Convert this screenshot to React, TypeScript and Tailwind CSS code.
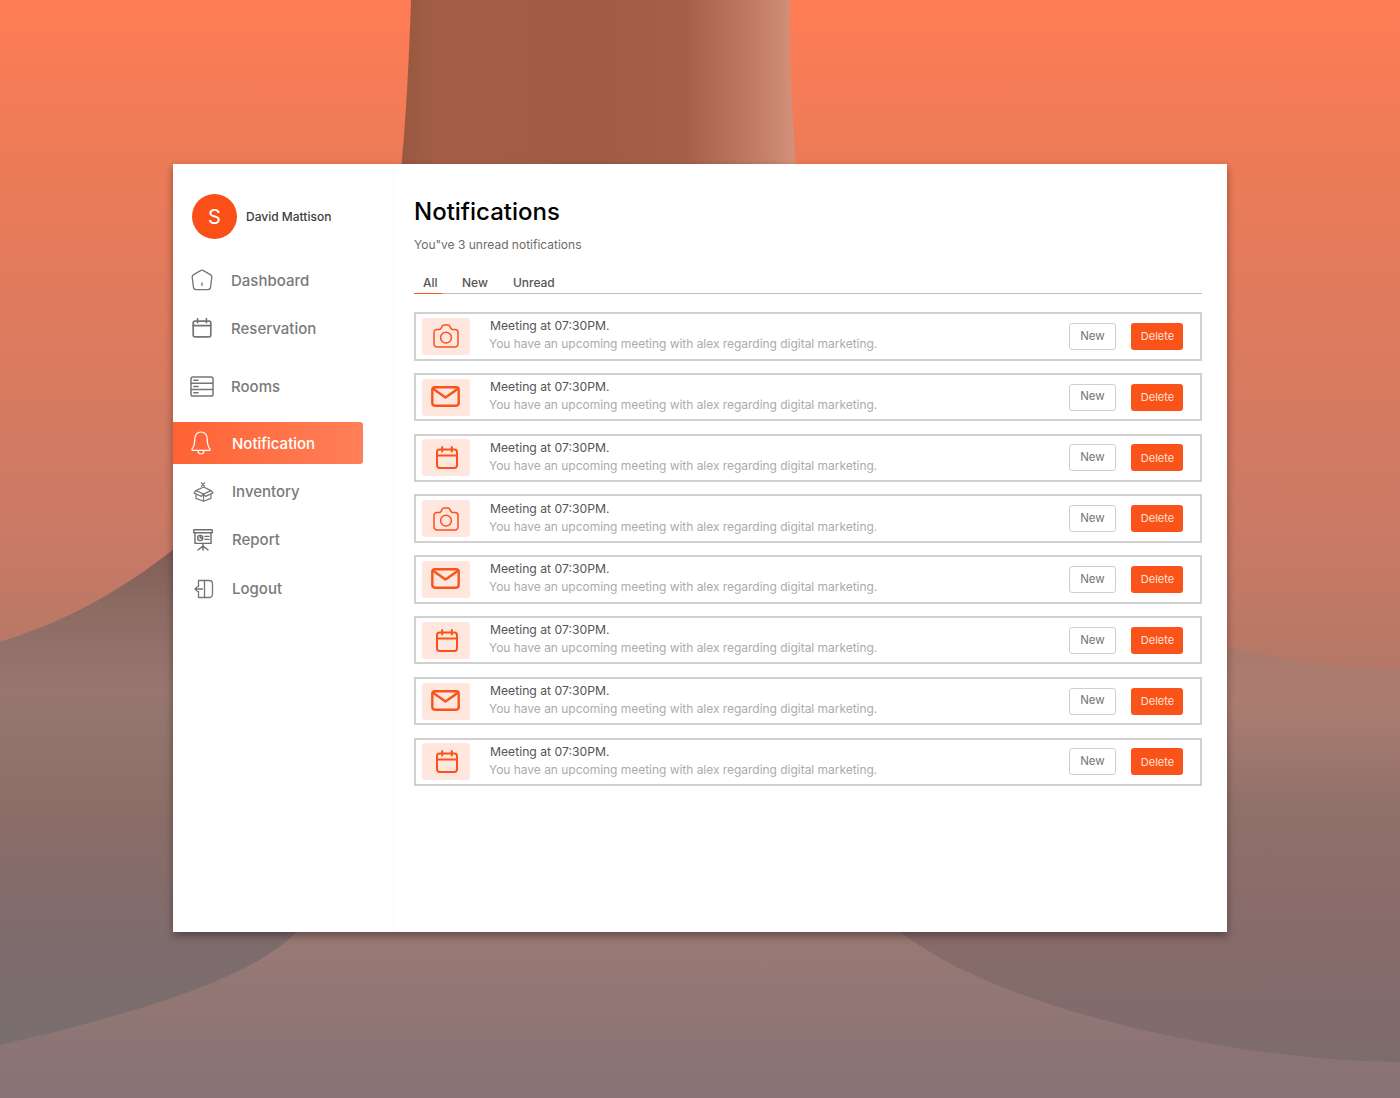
import React from "react";

const font = { fontFamily: "Inter, 'Liberation Sans', sans-serif" };

function Background() {
  return (
    <svg className="absolute inset-0" width="1400" height="1098" viewBox="0 0 1400 1098">
      <defs>
        <linearGradient id="base" x1="0" y1="0" x2="0" y2="1">
          <stop offset="0" stopColor="#FF7D55" />
          <stop offset="0.15" stopColor="#EC7B58" />
          <stop offset="0.5" stopColor="#C87A66" />
          <stop offset="0.6" stopColor="#B67866" />
          <stop offset="0.86" stopColor="#987974" />
          <stop offset="1" stopColor="#877275" />
        </linearGradient>
        <linearGradient id="col" x1="402" y1="0" x2="795" y2="0" gradientUnits="userSpaceOnUse">
          <stop offset="0" stopColor="#995840" />
          <stop offset="0.1" stopColor="#A45E47" />
          <stop offset="0.5" stopColor="#A05C46" />
          <stop offset="0.72" stopColor="#A5604A" />
          <stop offset="0.86" stopColor="#BA7661" />
          <stop offset="0.95" stopColor="#CA866F" />
          <stop offset="1" stopColor="#D4927C" />
        </linearGradient>
        <linearGradient id="left" x1="0" y1="540" x2="0" y2="1045" gradientUnits="userSpaceOnUse">
          <stop offset="0" stopColor="#7E5A52" />
          <stop offset="0.12" stopColor="#8B6A62" />
          <stop offset="0.3" stopColor="#977770" />
          <stop offset="0.55" stopColor="#8B6D68" />
          <stop offset="0.8" stopColor="#7E6C6D" />
          <stop offset="1" stopColor="#7A6E6E" />
        </linearGradient>
        <linearGradient id="right" x1="0" y1="640" x2="0" y2="1062" gradientUnits="userSpaceOnUse">
          <stop offset="0" stopColor="#A9796B" />
          <stop offset="0.15" stopColor="#AB7D71" />
          <stop offset="0.4" stopColor="#90706A" />
          <stop offset="0.7" stopColor="#876B6A" />
          <stop offset="1" stopColor="#7D6C6C" />
        </linearGradient>
      </defs>
      <rect width="1400" height="1098" fill="url(#base)" />
      <path d="M411 0 C409 60 406 120 401 170 L796 170 C792 110 789 50 790 0 Z" fill="url(#col)" />
      <path d="M0 642 C70 620 125 588 175 548 L400 548 L400 880 L295 933 C250 980 130 1015 0 1045 Z" fill="url(#left)" />
      <path d="M1200 640 C1270 660 1340 670 1400 669 L1400 1062 C1240 1062 1000 1010 902 933 L902 640 Z" fill="url(#right)" />
    </svg>
  );
}

const gray = "#757575";

function HomeIcon() {
  return (
    <svg width="22" height="22" viewBox="0 0 22 22" fill="none" stroke={gray} strokeWidth="1.3" strokeLinejoin="round">
      <path d="M9.6 1.6 L2.6 5.6 C1.6 6.2 1.1 7 1.2 8.2 L2.4 18.2 C2.6 19.8 3.4 20.6 5 20.6 H17 C18.6 20.6 19.4 19.8 19.6 18.2 L20.8 8.2 C20.9 7 20.4 6.2 19.4 5.6 L12.4 1.6 C11.4 1 10.6 1 9.6 1.6 Z" />
      <path d="M11 14 V16.4" strokeLinecap="round" />
    </svg>
  );
}
function NavCalendar() {
  return (
    <svg width="20" height="20" viewBox="0 0 20 20" fill="none" stroke={gray} strokeWidth="1.7" strokeLinecap="round">
      <rect x="1.2" y="3.2" width="17.6" height="15.6" rx="1.8" />
      <path d="M1.2 7.6 H18.8 M5.6 0.8 V4.6 M14.4 0.8 V4.6" />
    </svg>
  );
}
function RoomsIcon() {
  return (
    <svg width="24" height="21" viewBox="0 0 24 21" fill="none" stroke={gray} strokeWidth="1.5">
      <rect x="1" y="1" width="22" height="19" rx="1.8" />
      <path d="M1 7.3 H23 M1 13.6 H23" />
      <path d="M3.8 4.2 H8 M3.8 10.5 H8 M3.8 16.8 H8" strokeLinecap="round" />
    </svg>
  );
}
function BellIcon() {
  return (
    <svg width="20" height="24" viewBox="0 0 20 24" fill="none" stroke="#fff" strokeWidth="1.2" strokeLinejoin="round">
      <path d="M10 1 C5.8 1 3.8 4.4 3.8 8 C3.8 12.6 3 15.4 1 18.2 C0.6 18.9 1 19.4 1.6 19.4 H18.4 C19 19.4 19.4 18.9 19 18.2 C17 15.4 16.2 12.6 16.2 8 C16.2 4.4 14.2 1 10 1 Z" />
      <path d="M7 19.6 C7 21.6 8.4 23 10 23 C11.6 23 13 21.6 13 19.6" />
    </svg>
  );
}
function BoxIcon() {
  return (
    <svg width="21" height="20" viewBox="0 0 21 20" fill="none" stroke={gray} strokeWidth="1.2" strokeLinejoin="round" strokeLinecap="round">
      <path d="M8.5 0.8 L11.5 4 M11.5 0.8 L8.5 4" />
      <path d="M10.5 5 L3 8.6 L10.5 12 L18 8.6 Z" />
      <path d="M3 8.6 L1 11 L8.4 14.4 L10.5 12 L12.6 14.4 L20 11 L18 8.6" />
      <path d="M3 12 V16.4 L10.5 19.2 L18 16.4 V12 M10.5 12.2 V19" />
    </svg>
  );
}
function ReportIcon() {
  return (
    <svg width="20" height="22" viewBox="0 0 20 22" fill="none" stroke="#6e6e6e" strokeWidth="1.4" strokeLinecap="round">
      <rect x="0.7" y="0.8" width="18.6" height="3" rx="0.4" />
      <path d="M2 3.8 V14.4 H18 V3.8" />
      <circle cx="7.2" cy="9" r="2.6" />
      <path d="M7.2 6.4 V9 H9.8" />
      <path d="M12 7.4 H16 M12 10.4 H16" />
      <path d="M10 14.4 V17 M10 17 L5 21 M10 17 L15 21 M10 17 V21" />
    </svg>
  );
}
function LogoutIcon() {
  return (
    <svg width="20" height="20" viewBox="0 0 20 20" fill="none" stroke={gray} strokeWidth="1.3" strokeLinecap="round" strokeLinejoin="round">
      <path d="M4.5 7.5 V1.5 H15 C17.5 1.5 18.5 3 18.5 5 V15 C18.5 17 17.5 18.5 15 18.5 H4.5 V12.5" />
      <path d="M10.5 1.5 V18.5" />
      <path d="M1 10 H8.5 M3.4 7.6 L1 10 L3.4 12.4" />
    </svg>
  );
}

const orange = "#FA5319";

function CameraIcon() {
  return (
    <svg width="26" height="24" viewBox="0 0 26 24" fill="none" stroke={orange} strokeWidth="1.5" strokeLinejoin="round">
      <path d="M1 8.4 C1 6.6 2.2 5.4 4 5.4 H6.6 C7.4 5.4 7.8 5 8.2 4.2 L9 2.4 C9.4 1.4 9.9 1 11 1 H15 C16.1 1 16.6 1.4 17 2.4 L17.8 4.2 C18.2 5 18.6 5.4 19.4 5.4 H22 C23.8 5.4 25 6.6 25 8.4 V19.6 C25 21.6 23.8 23 22 23 H4 C2.2 23 1 21.6 1 19.6 Z" />
      <circle cx="13" cy="13.6" r="5.4" />
    </svg>
  );
}
function MailIcon() {
  return (
    <svg className="-ml-[1px] -mt-[1px]" width="29" height="21" viewBox="0 0 29 21" fill="none" stroke={orange} strokeWidth="2.4" strokeLinejoin="round" strokeLinecap="round">
      <rect x="1.3" y="1.3" width="26.4" height="18.4" rx="2.6" />
      <path d="M2.4 3 L14.5 11.6 L26.6 3" />
    </svg>
  );
}
function CalendarIcon() {
  return (
    <svg className="ml-[1px]" width="22" height="23" viewBox="0 0 22 23" fill="none" stroke={orange} strokeWidth="2" strokeLinecap="round">
      <rect x="1" y="3.4" width="20" height="18.5" rx="2.6" />
      <path d="M1 9.4 H21 M6.2 1 V5.4 M15.8 1 V5.4" />
    </svg>
  );
}

const kinds = ["camera", "mail", "calendar", "camera", "mail", "calendar", "mail", "calendar"];

function Row({ kind }: { kind: string }) {
  return (
    <div className="flex h-[48.5px] items-center border-2 border-[#d0d0d0] pl-[6px] pr-[17px]">
      <div className="flex h-[37px] w-[48px] items-center justify-center rounded-[3px] bg-[#FFE6DF]">
        {kind === "camera" ? <CameraIcon /> : kind === "mail" ? <MailIcon /> : <CalendarIcon />}
      </div>
      <div className="ml-[18px] flex flex-1 flex-col pb-[2px]">
        <span className="ml-[2px] text-[12.2px] leading-[18px] text-[#555555]">Meeting at 07:30PM.</span>
        <span className="ml-[1px] text-[12px] leading-[18px] tracking-[-0.03px] text-[#ababab]">
          You have an upcoming meeting with alex regarding digital marketing.
        </span>
      </div>
      <button className="h-[27px] w-[47px] rounded-[3px] border-[1.5px] border-[#cfcfcf] bg-white text-[11.5px] text-[#757575]">New</button>
      <button className="ml-[15px] h-[27px] w-[52px] rounded-[3px] bg-[#FA5319] pl-[1px] text-[11px] text-[#FFE3DA]">Delete</button>
    </div>
  );
}

function NavItem({ icon, label, textGap, cls }: { icon: React.ReactNode; label: string; textGap: string; cls: string }) {
  return (
    <div className={`flex h-[42px] items-center text-[15px] font-medium text-[#7a7a7a] ${cls}`}>
      {icon}
      <span className={textGap}>{label}</span>
    </div>
  );
}

export default function App() {
  return (
    <div className="relative h-[1098px] w-[1400px] overflow-hidden pl-[173px] pt-[164px]" style={font}>
      <Background />
      <div className="relative flex h-[768px] w-[1054px] bg-white shadow-[0_4px_8px_rgba(40,20,20,0.45)]">
        <aside className="h-full w-[221px] border-r border-[#fafafa]">
          <div className="ml-[19px] mt-[30px] flex items-center">
            <div className="flex h-[45px] w-[45px] items-center justify-center rounded-full bg-[#FA5017] text-[20px] text-white">S</div>
            <span className="ml-[9px] text-[12px] font-medium text-[#3d3d3d]">David Mattison</span>
          </div>
          <nav className="mt-[20px]">
            <NavItem cls="pl-[18px]" textGap="ml-[18px] pt-[2px]" icon={<HomeIcon />} label="Dashboard" />
            <NavItem cls="mt-[6px] pl-[19px]" textGap="ml-[19px] pt-[2px]" icon={<NavCalendar />} label="Reservation" />
            <NavItem cls="mt-[16px] pl-[17px]" textGap="ml-[17px] pt-[2px]" icon={<RoomsIcon />} label="Rooms" />
            <div className="mt-[15px] flex h-[42px] w-[189.5px] items-center rounded-r-[3px] bg-gradient-to-r from-[#FF6233] to-[#FF7F58] pl-[18px] text-[15px] font-medium text-white">
              <BellIcon />
              <span className="ml-[21px] pt-[3px]">Notification</span>
            </div>
            <NavItem cls="mt-[7px] pl-[20px]" textGap="ml-[18px] pt-[1px]" icon={<BoxIcon />} label="Inventory" />
            <NavItem cls="mt-[6px] pl-[20px]" textGap="ml-[19px] pt-[1px]" icon={<ReportIcon />} label="Report" />
            <NavItem cls="mt-[7px] pl-[21px]" textGap="ml-[18px] pt-[1px]" icon={<LogoutIcon />} label="Logout" />
          </nav>
        </aside>
        <main className="flex-1 pl-[20px] pr-[25px]">
          <h1 className="mt-[31px] text-[24px] font-[450] leading-[34px] text-black">Notifications</h1>
          <p className="mt-[7px] text-[12px] leading-[18px] text-[#6b6b6b]">You"ve 3 unread notifications</p>
          <div className="mt-[19px] flex h-[21px] items-start border-b border-[#bcbcbc] text-[12px] font-medium leading-[20px] text-[#555555]">
            <span className="h-[21px] w-[28px] border-b border-[#FA5319] pl-[9px]">All</span>
            <span className="ml-[20px]">New</span>
            <span className="ml-[25px]">Unread</span>
          </div>
          <div className="mt-[18px] flex flex-col gap-[12.3px]">
            {kinds.map((k, i) => (
              <Row key={i} kind={k} />
            ))}
          </div>
        </main>
      </div>
    </div>
  );
}
